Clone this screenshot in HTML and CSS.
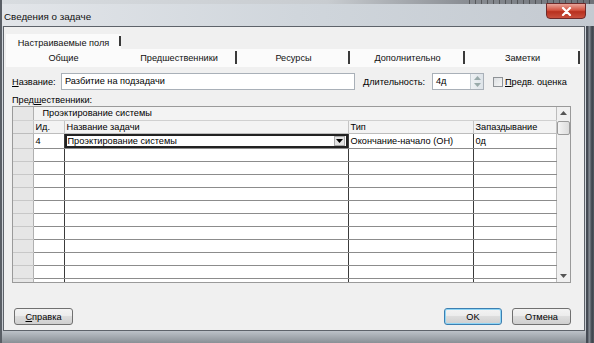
FILE: index.html
```html
<!DOCTYPE html>
<html lang="ru">
<head>
<meta charset="utf-8">
<link rel="stylesheet" href="styles.css">
</head>
<body>
<div class="screen">
  <div class="topstrip"></div>
  <div class="titlebar">
    <span class="title">Сведения о задаче</span>
    <div class="close"><svg width="11" height="9" viewBox="0 0 11 9"><path d="M2 1 L9 8 M9 1 L2 8" stroke="#fff" stroke-width="2.2" stroke-linecap="round"/></svg></div>
  </div>
  <div class="client">
    <div class="tabs">
      <div class="tabrow row1">
        <div class="tab w115 sep">Настраиваемые поля</div>
      </div>
      <div class="tabrow row2">
        <div class="tab w115">Общие</div>
        <div class="tab w116 sel sep">Предшественники</div>
        <div class="tab w113 sep">Ресурсы</div>
        <div class="tab w115 sep">Дополнительно</div>
        <div class="tab w115 sep">Заметки</div>
      </div>
    </div>
    <div class="panel">
      <div class="namerow">
        <span class="lbl name-lbl"><u>Н</u>азвание:</span>
        <div class="input name">Разбитие на подзадачи</div>
        <span class="lbl dur"><u>Д</u>лительность:</span>
        <div class="input duration">4д<div class="spin"><svg width="7" height="4" viewBox="0 0 7 4"><path d="M0 4 L3.5 0 L7 4Z" fill="#9aa"/></svg><svg width="7" height="4" viewBox="0 0 7 4"><path d="M0 0 L3.5 4 L7 0Z" fill="#9aa"/></svg></div></div>
        <span class="check"></span>
        <span class="lbl"><u>П</u>редв. оценка</span>
      </div>
      <div class="predlbl">Пред<u>ш</u>ественники:</div>
      <div class="grid">
        <table class="tbl">
          <colgroup><col class="c0"><col class="c1"><col class="c2"><col class="c3"><col class="c4"></colgroup>
          <tr class="hdr1"><td class="rh"></td><td colspan="4" class="group">Проэктирование системы</td></tr>
          <tr class="hdr2"><td class="rh"></td><td>Ид.</td><td>Название задачи</td><td>Тип</td><td>Запаздывание</td></tr>
          <tr class="row first"><td class="rh"></td><td>4</td><td class="edit"><div class="editbox">Проэктирование системы<span class="dd"><svg width="7" height="4" viewBox="0 0 7 4"><path d="M0 0 L3.5 4 L7 0Z" fill="#000"/></svg></span></div></td><td>Окончание-начало (ОН)</td><td>0д</td></tr>
          <tr class="row"><td class="rh"></td><td></td><td></td><td></td><td></td></tr>
          <tr class="row"><td class="rh"></td><td></td><td></td><td></td><td></td></tr>
          <tr class="row"><td class="rh"></td><td></td><td></td><td></td><td></td></tr>
          <tr class="row"><td class="rh"></td><td></td><td></td><td></td><td></td></tr>
          <tr class="row"><td class="rh"></td><td></td><td></td><td></td><td></td></tr>
          <tr class="row"><td class="rh"></td><td></td><td></td><td></td><td></td></tr>
          <tr class="row"><td class="rh"></td><td></td><td></td><td></td><td></td></tr>
          <tr class="row"><td class="rh"></td><td></td><td></td><td></td><td></td></tr>
          <tr class="row"><td class="rh"></td><td></td><td></td><td></td><td></td></tr>
          <tr class="row"><td class="rh"></td><td></td><td></td><td></td><td></td></tr>
          <tr class="row"><td class="rh"></td><td></td><td></td><td></td><td></td></tr>
        </table>
        <div class="scroll">
          <svg width="7" height="4" viewBox="0 0 7 4"><path d="M0 4 L3.5 0 L7 4Z" fill="#555"/></svg>
          <div class="thumb"></div>
          <div class="spacer"></div>
          <svg width="7" height="4" viewBox="0 0 7 4"><path d="M0 0 L3.5 4 L7 0Z" fill="#555"/></svg>
        </div>
      </div>
      <div class="buttons">
        <div class="btn help"><u>С</u>правка</div>
        <div class="right">
          <div class="btn ok">OK</div>
          <div class="btn">Отмена</div>
        </div>
      </div>
    </div>
  </div>
</div>
</body>
</html>
```

FILE: styles.css
```css
* { box-sizing: border-box; }
html, body { margin: 0; padding: 0; }
body { font-family: "Liberation Sans", Arial, sans-serif; font-size: 9.2px; color: #000; }
u { text-decoration: underline; }

.screen {
  width: 594px; height: 343px; overflow: hidden; position: relative;
  background:
    linear-gradient(90deg, transparent 584px, #454b54 584px, #454b54 586px, #8d949c 587px, #3c424a 590px, #6a7078 594px),
    linear-gradient(#cdd3da, #d6dbe0 40%, #c4c9cf 96%, #8a9096);
  border-left: 2px solid #5a5f66;
}
.topstrip {
  height: 4px;
  background:
    repeating-linear-gradient(90deg, transparent 0 5px, rgba(40,40,40,0.5) 5px 6px) right top / 130px 4px no-repeat,
    linear-gradient(90deg, #d8dce0 0%, #c8ccd0 55%, #8a8e94 78%, #6e7278 100%);
}
.titlebar {
  height: 22px; display: flex; align-items: center; padding-left: 2px;
  background: linear-gradient(90deg, #e2e5e9, #d0d6dc 50%, #c4cad1);
}
.title { font-size: 9.8px; color: #111; margin-top: 3px; }
.close {
  position: absolute; top: 3px; left: 544px; width: 40px; height: 16px;
  border: 1px solid #6e2a2a; border-radius: 0 0 4px 4px;
  background: linear-gradient(#e8a59a, #d2523f 45%, #b8301e 55%, #c8503e);
  display: flex; align-items: center; justify-content: center;
}

.client {
  width: 582px; height: 305px; margin-left: 1px;
  background: #f0f0f0; border: 1px solid #5e636a;
  padding: 7px 0 0 2px;
}
.tabrow { display: flex; }
.row1 { height: 15px; }
.row2 { height: 18px; }
.tab {
  display: flex; align-items: center; justify-content: center;
  background: #fbfbfb; color: #111; position: relative;
}
.row1 .tab { padding-top: 2px; }
.tab.sep::after {
  content: ""; position: absolute; right: 0; top: 2px; bottom: 3px; width: 2px; background: #3a3a3a;
}
.tab.sel { background: #fbfbfb; }
.w113 { width: 113px; } .w115 { width: 115px; } .w116 { width: 116px; }

.panel { padding: 6px 0 0 6px; }
.namerow { display: flex; align-items: center; height: 17px; }
.lbl { white-space: nowrap; }
.name-lbl { width: 49px; }
.input {
  height: 17px; border: 1px solid #a9b0b8; background: #fff;
  padding: 1px 0 0 3px; line-height: 13px;
}
.input.name { width: 294px; }
.lbl.dur { margin-left: 8px; width: 69px; }
.input.duration { width: 52px; position: relative; }
.spin {
  position: absolute; right: 0; top: 0; bottom: 0; width: 13px;
  background: linear-gradient(90deg, #eef1f4, #dde3e8);
  border-left: 1px solid #c8d0d6;
  display: flex; flex-direction: column; align-items: center; justify-content: space-around; padding: 1px 0;
}
.check {
  width: 10px; height: 10px; margin: 0 2px 0 9px;
  border: 1px solid #8e9296; background: linear-gradient(135deg, #dcdfe2, #f6f6f6);
}

.predlbl { margin-top: 4px; height: 12px; line-height: 12px; }

.grid {
  display: flex; width: 559px; height: 177px; border: 1px solid #9a9a9a; background: #fff; overflow: hidden;
}
.tbl { border-collapse: collapse; table-layout: fixed; width: 543px; }
.c0 { width: 20px; } .c1 { width: 31px; } .c2 { width: 284px; } .c3 { width: 125px; } .c4 { width: 83px; }
.tbl td {
  padding: 0 2px; height: 13px; line-height: 12px; white-space: nowrap; overflow: hidden;
  border-right: 1px solid #3c3c3c; border-bottom: 1px solid #8c8c8c;
}
.tbl td.rh { background: #e6e6e6; border-right: 1px solid #b0b0b0; border-bottom: 1px solid #c8c8c8; }
.tbl tr.hdr1 td { background: #f3f3f3; border-bottom: 1px solid #d0d0d0; }
.tbl tr.hdr1 td.rh { background: #e6e6e6; }
.tbl td.group { padding-left: 9px; }
.tbl tr.hdr2 td { background: #f3f3f3; border-right: 1px solid #c4c4c4; border-bottom: 1px solid #bdbdbd; }
.tbl tr.hdr2 td.rh { background: #e6e6e6; }
.tbl tr.first td { height: 14px; }
.tbl td:last-child { border-right: 1px solid #bcbcbc; }
.tbl td.edit { padding: 0; }
.editbox {
  border: 2px solid #222; height: 14px; line-height: 10px; padding-left: 1px;
  display: flex; align-items: center; justify-content: space-between;
}
.dd {
  width: 11px; height: 10px; margin-right: 1px; background: #e4e4e4; border: 1px solid #aaa;
  display: flex; align-items: center; justify-content: center;
}

.scroll {
  width: 15px; background: #f0f0f0; display: flex; flex-direction: column; align-items: center;
  padding: 4px 0 4px;
}
.thumb {
  width: 13px; height: 14px; margin-top: 6px;
  border: 1px solid #9a9a9a; border-radius: 2px; background: linear-gradient(90deg, #f4f4f4, #dcdcdc);
}
.spacer { flex: 1; }

.buttons {
  display: flex; justify-content: space-between; align-items: center;
  margin-top: 25px; width: 559px; padding-left: 2px;
}
.right { display: flex; gap: 10px; }
.btn {
  width: 59px; height: 17px; border: 1px solid #707070; border-radius: 3px;
  background: linear-gradient(#f3f3f3, #ececec 45%, #dddddd 50%, #cfcfcf);
  display: flex; align-items: center; justify-content: center;
}
.btn.ok { width: 58px; border-color: #3c7fb1; box-shadow: inset 0 0 0 1px #8fd5f5; }
```
